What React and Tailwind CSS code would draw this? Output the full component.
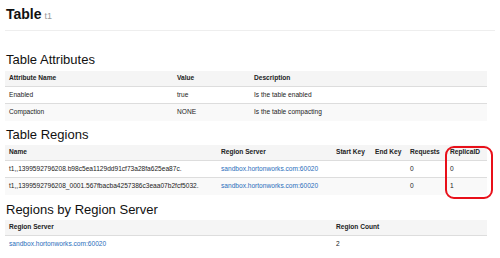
import React from 'react';

const attrs = [
    { name: 'Enabled', value: 'true', desc: 'Is the table enabled' },
    { name: 'Compaction', value: 'NONE', desc: 'Is the table compacting' },
];

const regions = [
    { name: 't1,,1399592796208.b98c5ea1129dd91cf73a28fa625ea87c.', server: 'sandbox.hortonworks.com:60020', requests: '0', replica: '0' },
    { name: 't1,,1399592796208_0001.567fbacba4257386c3eaa07b2fcf5032.', server: 'sandbox.hortonworks.com:60020', requests: '0', replica: '1' },
];

const th = 'text-left font-bold px-[4px] h-[16px] align-middle';
const td = 'text-left px-[4px] h-[17px] align-middle border-t border-[#dddddd]';

const Heading = ({ children, className = '' }) => (
    <h2 className={`text-[13px] leading-[15px] font-medium text-[#111] ${className}`}>{children}</h2>
);

const App = () => {
    return (
        <div className="w-[500px] h-[258px] bg-white overflow-hidden px-[5px] text-[#222] font-['Liberation_Sans',Arial,sans-serif]">
            <div className="pt-[5px] pl-[1px] flex items-baseline gap-[3px]">
                <span className="text-[14px] leading-[18px] font-semibold text-[#111]">Table</span>
                <span className="text-[9px] text-[#999]">t1</span>
            </div>
            <div className="mt-[6px] border-t border-[#eeeeee]" />

            <Heading className="mt-[21px] pl-[1px]">Table Attributes</Heading>
            <table className="mt-[4px] w-[482px] table-fixed border-collapse text-[6.6px]">
                <colgroup>
                    <col className="w-[168px]" />
                    <col className="w-[77px]" />
                    <col />
                </colgroup>
                <tbody>
                    <tr className="bg-[#f5f5f5]">
                        <th className={th}>Attribute Name</th>
                        <th className={th}>Value</th>
                        <th className={th}>Description</th>
                    </tr>
                    {attrs.map((a, i) => (
                        <tr key={a.name} className={i % 2 ? 'bg-[#f9f9f9]' : ''}>
                            <td className={td}>{a.name}</td>
                            <td className={td}>{a.value}</td>
                            <td className={td}>{a.desc}</td>
                        </tr>
                    ))}
                </tbody>
            </table>

            <Heading className="mt-[6px] pl-[1px]">Table Regions</Heading>
            <div className="relative mt-[3px]">
                <table className="w-[482px] table-fixed border-collapse text-[6.6px]">
                    <colgroup>
                        <col className="w-[212px]" />
                        <col className="w-[115px]" />
                        <col className="w-[39px]" />
                        <col className="w-[35px]" />
                        <col className="w-[40px]" />
                        <col />
                    </colgroup>
                    <tbody>
                        <tr className="bg-[#f5f5f5]">
                            <th className={th}>Name</th>
                            <th className={th}>Region Server</th>
                            <th className={th}>Start Key</th>
                            <th className={th}>End Key</th>
                            <th className={th}>Requests</th>
                            <th className={th}>ReplicaID</th>
                        </tr>
                        {regions.map((r, i) => (
                            <tr key={r.name} className={i % 2 ? 'bg-[#f9f9f9]' : ''}>
                                <td className={`${td} whitespace-nowrap`}>{r.name}</td>
                                <td className={td}><a className="text-[#2a6ebb]">{r.server}</a></td>
                                <td className={td}></td>
                                <td className={td}></td>
                                <td className={td}>{r.requests}</td>
                                <td className={td}>{r.replica}</td>
                            </tr>
                        ))}
                    </tbody>
                </table>
                <div className="absolute left-[440px] top-[1px] w-[48px] h-[53px] border-2 border-[#e8101a] rounded-[9px]" />
            </div>

            <Heading className="mt-[7px] pl-[1px]">Regions by Region Server</Heading>
            <table className="mt-[3px] w-[482px] table-fixed border-collapse text-[6.6px]">
                <colgroup>
                    <col className="w-[327px]" />
                    <col />
                </colgroup>
                <tbody>
                    <tr className="bg-[#f5f5f5]">
                        <th className={th}>Region Server</th>
                        <th className={th}>Region Count</th>
                    </tr>
                    <tr>
                        <td className={td}><a className="text-[#2a6ebb]">sandbox.hortonworks.com:60020</a></td>
                        <td className={td}>2</td>
                    </tr>
                </tbody>
            </table>
        </div>
    );
};

export default App;
